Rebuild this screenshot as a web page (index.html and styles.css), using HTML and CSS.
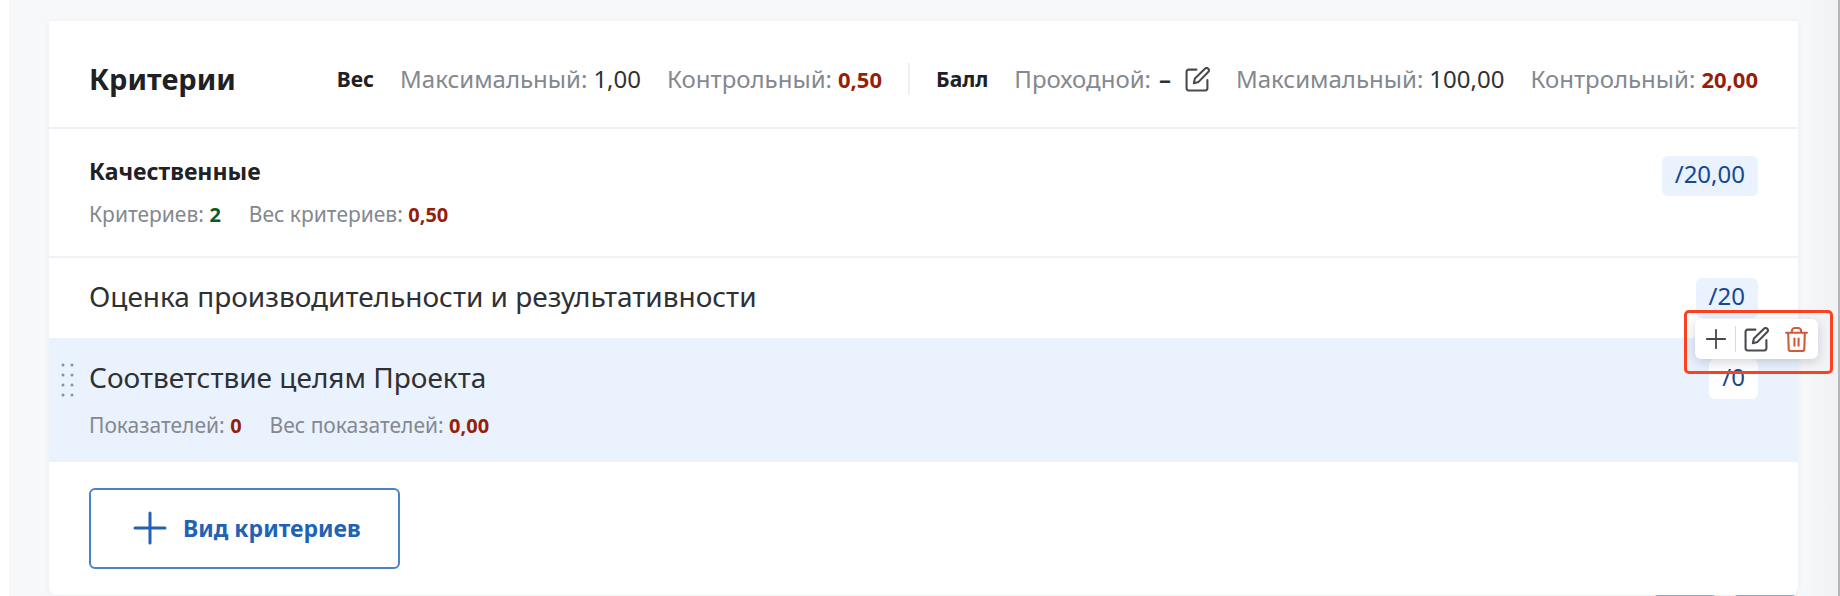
FILE: index.html
```html
<!DOCTYPE html>
<html lang="ru">
<head>
<meta charset="utf-8">
<title>Критерии</title>
<link rel="stylesheet" href="styles.css">
</head>
<body>
<svg class="sprite" aria-hidden="true">
  <symbol id="edit" viewBox="0 0 24 24"><path d="M11 2.500H3.500a2 2 0 0 0-2 2v16a2 2 0 0 0 2 2h16a2 2 0 0 0 2-2V12.500M8.500 15.500l1-4.500L19.400 1.500a1.800 1.800 0 0 1 2.600 0l.5.5a1.800 1.800 0 0 1 0 2.600L13 14.300z"/></symbol>
  <symbol id="plus" viewBox="0 0 24 24"><path d="M12 2v20M2 12h20"/></symbol>
  <symbol id="trash" viewBox="0 0 24 24"><path d="M2 5.500h20M4 5.500l.5 15.500a2 2 0 0 0 2 2h11a2 2 0 0 0 2-2L20 5.500M7.500 5.500V4a3 3 0 0 1 3-3h3a3 3 0 0 1 3 3v1.500M10 11v7M14 11v7"/></symbol>
</svg>
<main class="page">
  <section class="card">
    <header class="card-header">
      <h1 class="title">Критерии</h1>
      <div class="metrics">
        <strong>Вес</strong>
        <span class="metric">Максимальный: <span class="value">1,00</span></span>
        <span class="metric">Контрольный: <b class="bad">0,50</b></span>
        <span class="divider"></span>
        <strong>Балл</strong>
        <span class="metric">Проходной: <span class="value empty">–</span><button class="icon-button" aria-label="Изменить проходной балл"><svg class="icon"><use href="#edit"/></svg></button></span>
        <span class="metric">Максимальный: <span class="value">100,00</span></span>
        <span class="metric">Контрольный: <b class="bad">20,00</b></span>
      </div>
    </header>
    <div class="row group">
      <div class="info">
        <h2 class="group-name">Качественные</h2>
        <p class="details"><span>Критериев: <b class="good">2</b></span><span>Вес критериев: <b class="bad">0,50</b></span></p>
      </div>
      <span class="badge">/20,00</span>
    </div>
    <div class="row criterion">
      <h3 class="name">Оценка производительности и результативности</h3>
      <span class="badge">/20</span>
    </div>
    <div class="row criterion active">
      <svg class="grip" viewBox="0 0 16 36" aria-hidden="true"><path d="M3 3v0M12 3v0M3 13v0M12 13v0M3 23v0M12 23v0M3 33v0M12 33v0"/></svg>
      <div class="info">
        <h3 class="name">Соответствие целям Проекта</h3>
        <p class="details"><span>Показателей: <b class="bad">0</b></span><span>Вес показателей: <b class="bad">0,00</b></span></p>
      </div>
      <span class="badge badge-light">/0</span>
      <div class="highlight">
        <div class="toolbar">
          <button class="icon-button" aria-label="Добавить"><svg class="icon icon-plus"><use href="#plus"/></svg></button>
          <span class="separator"></span>
          <button class="icon-button" aria-label="Изменить"><svg class="icon"><use href="#edit"/></svg></button>
          <button class="icon-button delete" aria-label="Удалить"><svg class="icon"><use href="#trash"/></svg></button>
        </div>
      </div>
    </div>
    <footer class="card-footer">
      <button class="add"><svg class="icon add-icon"><use href="#plus"/></svg>Вид критериев</button>
    </footer>
  </section>
  <div class="next-actions"><span></span><span></span></div>
</main>
</body>
</html>
```
FILE: styles.css
```css
* { box-sizing: border-box; }
body { margin: 0; background: #fff; overflow: hidden; font-family: "Noto Sans", sans-serif; color: #2f3033; }
h1, h2, h3, p { margin: 0; }
button { font: inherit; cursor: pointer; }
.sprite { position: absolute; width: 0; height: 0; }
.page { min-height: 100vh; margin-left: 9px; padding: 21px 40px 0; border-right: 2px solid #b4b6ba; background: linear-gradient(to left, #f0f1f3, #f7f8fa 36px); }
.card { background: #fff; border-radius: 2px 2px 8px 8px; box-shadow: 0 1px 6px rgba(40, 50, 80, .06); }
.card-header { display: flex; align-items: center; justify-content: space-between; padding: 39px 40px 29px; border-bottom: 2px solid #f1f2f8; }
.title { font-size: 29px; line-height: 38px; color: #202124; }
.metrics { display: flex; align-items: center; gap: 26px; font-size: 24px; line-height: 32px; white-space: nowrap; }
.metrics strong { font-size: 21px; color: #202124; }
.metrics .bad { font-size: 22px; }
.metric { display: flex; align-items: center; gap: 6px; color: #84888f; }
.value { color: #303134; }
.empty { padding: 0 8px 0 2px; font-weight: 700; }
.divider { width: 2px; height: 32px; background: #eff0f3; }
.bad { color: #951f08; }
.good { color: #075c22; }
.icon { display: block; width: 25px; height: 25px; fill: none; stroke: currentColor; stroke-width: 2; stroke-linecap: round; stroke-linejoin: round; }
.icon-button { padding: 0; border: 0; background: none; color: #484a4e; }
.row { position: relative; display: flex; align-items: flex-start; justify-content: space-between; padding: 20px 40px; }
.group { padding-top: 27px; padding-bottom: 28px; border-bottom: 2px solid #f1f2f8; }
.group-name { font-size: 23px; line-height: 30px; color: #202124; }
.details { display: flex; gap: 28px; font-size: 21px; line-height: 26px; color: #84888f; }
.details b { font-size: 20px; }
.group .details { margin-top: 15px; }
.name { font-size: 28px; line-height: 36px; font-weight: 400; }
.badge { padding: 2px 13px 6px; border-radius: 6px; background: #eaf2fe; color: #164792; font-size: 24px; line-height: 32px; }
.active { padding-top: 21px; padding-bottom: 23px; background: #eaf2fe; }
.active .details { margin-top: 17px; }
.badge-light { background: #fff; }
.grip { position: absolute; left: 11px; top: 24px; width: 16px; height: 36px; fill: none; stroke: #8393a8; stroke-width: 3; stroke-linecap: round; }
.highlight { position: absolute; top: -28px; right: -35px; padding: 6px 12px 12px 8px; border: 3px solid #fc421f; border-radius: 5px; }
.toolbar { display: flex; align-items: center; justify-content: space-between; width: 123px; height: 40px; padding: 0 9px 0 10px; border-radius: 6px; background: #fff; box-shadow: 0 3px 12px rgba(40, 50, 80, .22); }
.separator { width: 1px; height: 26px; background: #d5d8df; }
.icon-plus { width: 22px; height: 22px; }
.delete { margin-left: 7px; color: #cf5b38; }
.card-footer { padding: 26px 40px; }
.add { display: flex; align-items: center; gap: 15px; padding: 19px 37px 20px 41px; border: 2px solid #4a83c9; border-radius: 6px; background: #fff; color: #2262b5; font-size: 23px; line-height: 38px; font-weight: 700; }
.add-icon { width: 36px; height: 36px; }
.next-actions { display: flex; justify-content: flex-end; gap: 18px; padding-right: 2px; }
.next-actions span { width: 62px; height: 8px; border-radius: 6px; background: #86a8d4; }
```
